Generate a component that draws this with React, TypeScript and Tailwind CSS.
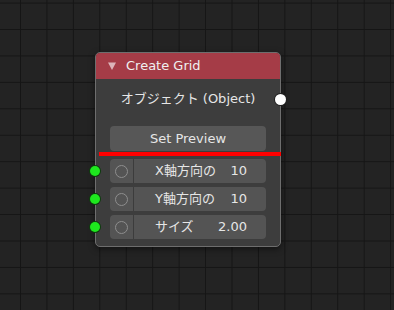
import React from 'react';

const jp = "font-['DejaVu_Sans','Noto_Sans_CJK_JP',sans-serif]";

const InputRow: React.FC<{ label: string; value: string }> = ({ label, value }) => (
  <div className="relative flex h-[24px] rounded-[4px] bg-[#545454] text-[13px] text-[#e6e6e6]">
    <span className="absolute left-[-20px] top-[7px] h-[10px] w-[10px] rounded-full bg-[#1ee81e] ring-1 ring-[#0d3d0d]"></span>
    <div className="flex w-[24px] items-center justify-center border-r border-[#3c3c3c]">
      <span className="h-[13px] w-[13px] rounded-full border-[1.5px] border-[#8e8e8e]"></span>
    </div>
    <div className="flex flex-1 items-center justify-between pl-[21px] pr-[19px]">
      <span>{label}</span>
      <span>{value}</span>
    </div>
  </div>
);

const App: React.FC = () => {
  return (
    <div
      className={`relative h-[310px] w-[394px] overflow-hidden bg-[#232323] bg-[image:linear-gradient(to_right,#151515_1px,transparent_1px),linear-gradient(to_bottom,#151515_1px,transparent_1px)] bg-[size:26.45px_26.45px] bg-[position:20px_29px] pl-[95px] pt-[52px] ${jp}`}
    >
      <div className="w-[186px] overflow-visible rounded-[5px] border border-[#6e6e6e] bg-[#3d3d3d] shadow-[0_2px_6px_rgba(0,0,0,0.5)]">
        <div className="flex h-[26px] items-center gap-[10px] rounded-t-[4px] bg-[#a53c47] pl-[12px] text-[13px] text-[#f0f0f0]">
          <svg width="8" height="8" viewBox="0 0 8 8">
            <path d="M0 0.5 L8 0.5 L4 8 Z" fill="#dcb4b9" />
          </svg>
          <span>Create Grid</span>
        </div>
        <div className="relative flex h-[40px] items-center justify-center text-[13px] text-[#e6e6e6]">
          オブジェクト (Object)
          <span className="absolute right-[-6px] top-[15px] h-[11px] w-[11px] rounded-full bg-white ring-1 ring-[#222]"></span>
        </div>
        <div className="flex flex-col gap-[4px] px-[14px] pb-[7px] pt-[7px]">
          <div className="mb-[4px] flex h-[25px] items-center justify-center rounded-[4px] bg-[#575757] text-[13px] text-[#e6e6e6]">
            Set Preview
          </div>
          <InputRow label="X軸方向の" value="10" />
          <InputRow label="Y軸方向の" value="10" />
          <InputRow label="サイズ" value="2.00" />
        </div>
      </div>
      <div className="absolute left-[99px] top-[152px] h-[4px] w-[182px] bg-[#ff0000]"></div>
    </div>
  );
};

export default App;
